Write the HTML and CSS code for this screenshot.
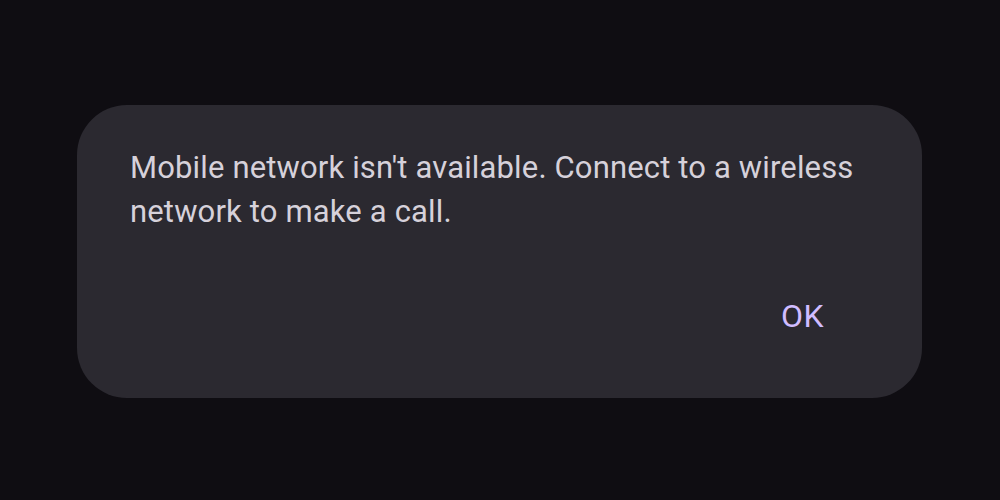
FILE: index.html
```html
<!DOCTYPE html>
<html>
<head>
<meta charset="utf-8">
<link rel="stylesheet" href="styles.css">
</head>
<body>
<div class="dialog">
  <p class="message">Mobile network isn't available. Connect to a wireless network to make a call.</p>
  <div class="actions">
    <button class="ok">OK</button>
  </div>
</div>
</body>
</html>
```
FILE: styles.css
```css
html, body {
  margin: 0;
  height: 100%;
}
body {
  background: #0f0d12;
  font-family: Roboto, "Noto Sans", sans-serif;
  padding-top: 105px;
  box-sizing: border-box;
}
.dialog {
  margin-left: 77px;
  width: 845px;
  height: 293px;
  box-sizing: border-box;
  background: #2b2930;
  border-radius: 50px;
  padding: 41px 40px 0 53px;
  display: flex;
  flex-direction: column;
}
.message {
  margin: 0;
  color: #d6d1da;
  font-size: 31px;
  line-height: 44px;
  letter-spacing: 0.15px;
}
.actions {
  display: flex;
  justify-content: flex-end;
  margin-top: 62px;
  padding-right: 58px;
}
.ok {
  background: none;
  border: 0;
  padding: 0;
  color: #d0bcff;
  font-family: inherit;
  font-size: 32px;
  line-height: 40px;
  letter-spacing: 0.5px;
}
```
